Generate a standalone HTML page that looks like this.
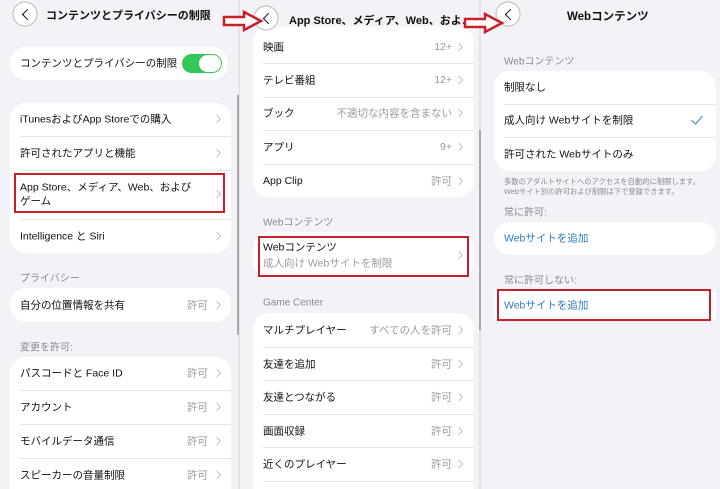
<!DOCTYPE html><html><head><meta charset="utf-8"><style>
*{margin:0;padding:0;box-sizing:border-box}
html{width:720px;height:489px;overflow:hidden}
body{width:720px;height:489px;background:#f2f2f7;font-family:"Liberation Sans","Noto Sans CJK JP",sans-serif;position:relative;overflow:hidden;color:#111}
.a{position:absolute;white-space:nowrap}
.card{position:absolute;background:#fff;border-radius:16px}
.t{position:absolute;font-size:10.5px;transform:translateY(-50%);white-space:nowrap}
.v{position:absolute;font-size:10.5px;color:#9a9aa0;transform:translateY(-50%);white-space:nowrap;text-align:right}
.h{position:absolute;font-size:10px;color:#8a8a8f;transform:translateY(-50%);white-space:nowrap}
.sep{position:absolute;height:1px;background:#e6e6ea}
.chev{position:absolute;width:6px;height:6px;border-right:1.3px solid #c4c4c8;border-top:1.3px solid #c4c4c8;transform:translate(-50%,-50%) rotate(45deg)}
.back{position:absolute;width:25px;height:25px;border-radius:50%;background:#fff;border:1px solid #bbb;transform:translate(-50%,-50%)}
.back:after{content:"";position:absolute;left:10px;top:8px;width:7px;height:7px;border-left:1.6px solid #111;border-bottom:1.6px solid #111;transform:rotate(45deg)}
.red{position:absolute;border:2.5px solid #c8202a}
.blue{color:#2a7cc0}
.p1{right:512px}.p2{right:268px}
</style></head><body>
<div class="a" style="left:238px;top:0;width:2px;height:489px;background:#e4e4e8"></div>
<div class="a" style="left:237px;top:95px;width:2px;height:240px;background:#a8a8ac"></div>
<div class="a" style="left:479px;top:0;width:2px;height:489px;background:#e4e4e8"></div>
<div class="a" style="left:479px;top:130px;width:2px;height:200px;background:#a8a8ac"></div>

<!-- Panel 1 -->
<div class="back" style="left:25px;top:14px"></div>
<div class="a" style="left:46px;top:7px;font-size:11px;font-weight:bold">コンテンツとプライバシーの制限</div>
<div class="card" style="left:10px;top:47px;width:218px;height:33px"></div>
<div class="t" style="left:20px;top:63px">コンテンツとプライバシーの制限</div>
<div class="a" style="left:182px;top:54px;width:40px;height:19px;border-radius:10px;background:#34c759"></div>
<div class="a" style="left:199px;top:55px;width:22px;height:17px;border-radius:9px;background:#fff"></div>

<div class="card" style="left:10px;top:103px;width:221px;height:150px"></div>
<div class="t" style="left:20px;top:119px">iTunesおよびApp Storeでの購入</div><div class="chev" style="left:217px;top:119px"></div>
<div class="sep" style="left:20px;top:136px;width:211px"></div>
<div class="t" style="left:20px;top:153px">許可されたアプリと機能</div><div class="chev" style="left:217px;top:153px"></div>
<div class="sep" style="left:20px;top:170px;width:211px"></div>
<div class="t" style="left:20px;top:187px">App Store、メディア、Web、および</div>
<div class="t" style="left:20px;top:201px">ゲーム</div><div class="chev" style="left:217px;top:194px"></div>
<div class="red" style="left:14px;top:173px;width:211px;height:40px"></div>
<div class="sep" style="left:20px;top:219px;width:211px"></div>
<div class="t" style="left:20px;top:236px">Intelligence と Siri</div><div class="chev" style="left:217px;top:236px"></div>

<div class="h" style="left:20px;top:277px">プライバシー</div>
<div class="card" style="left:10px;top:288px;width:221px;height:34px"></div>
<div class="t" style="left:20px;top:305px">自分の位置情報を共有</div><div class="v p1" style="top:305px">許可</div><div class="chev" style="left:217px;top:305px"></div>
<div class="h" style="left:20px;top:346px">変更を許可:</div>
<div class="card" style="left:10px;top:357px;width:221px;height:150px"></div>
<div class="t" style="left:20px;top:373px">パスコードと Face ID</div><div class="v p1" style="top:373px">許可</div><div class="chev" style="left:217px;top:373px"></div>
<div class="sep" style="left:20px;top:390px;width:211px"></div>
<div class="t" style="left:20px;top:407px">アカウント</div><div class="v p1" style="top:407px">許可</div><div class="chev" style="left:217px;top:407px"></div>
<div class="sep" style="left:20px;top:424px;width:211px"></div>
<div class="t" style="left:20px;top:441px">モバイルデータ通信</div><div class="v p1" style="top:441px">許可</div><div class="chev" style="left:217px;top:441px"></div>
<div class="sep" style="left:20px;top:458px;width:211px"></div>
<div class="t" style="left:20px;top:475px">スピーカーの音量制限</div><div class="v p1" style="top:475px">許可</div><div class="chev" style="left:217px;top:475px"></div>

<!-- Panel 2 -->
<div class="card" style="left:253px;top:26px;width:221px;height:171px"></div>
<div class="t" style="left:263px;top:47px">映画</div><div class="v p2" style="top:47px">12+</div><div class="chev" style="left:459px;top:47px"></div>
<div class="sep" style="left:263px;top:63px;width:211px"></div>
<div class="t" style="left:263px;top:80px">テレビ番組</div><div class="v p2" style="top:80px">12+</div><div class="chev" style="left:459px;top:80px"></div>
<div class="sep" style="left:263px;top:97px;width:211px"></div>
<div class="t" style="left:263px;top:113px">ブック</div><div class="v p2" style="top:113px">不適切な内容を含まない</div><div class="chev" style="left:459px;top:113px"></div>
<div class="sep" style="left:263px;top:130px;width:211px"></div>
<div class="t" style="left:263px;top:147px">アプリ</div><div class="v p2" style="top:147px">9+</div><div class="chev" style="left:459px;top:147px"></div>
<div class="sep" style="left:263px;top:164px;width:211px"></div>
<div class="t" style="left:263px;top:181px">App Clip</div><div class="v p2" style="top:181px">許可</div><div class="chev" style="left:459px;top:181px"></div>
<div class="a" style="left:240px;top:0;width:238px;height:30px;background:linear-gradient(#f2f2f7 70%,rgba(242,242,247,0))"></div>
<div class="back" style="left:266px;top:18px"></div>
<div class="a" style="left:289px;top:12px;font-size:11px;font-weight:bold">App Store、メディア、Web、およ…</div>

<div class="h" style="left:263px;top:221px">Webコンテンツ</div>
<div class="card" style="left:253px;top:232px;width:221px;height:46px"></div>
<div class="t" style="left:263px;top:247px">Webコンテンツ</div>
<div class="t" style="left:263px;top:263px;color:#9a9aa0">成人向け Webサイトを制限</div><div class="chev" style="left:459px;top:255px"></div>
<div class="red" style="left:258px;top:236px;width:211px;height:41px"></div>
<div class="h" style="left:263px;top:303px">Game Center</div>
<div class="card" style="left:253px;top:313px;width:221px;height:200px"></div>
<div class="t" style="left:263px;top:330px">マルチプレイヤー</div><div class="v p2" style="top:330px">すべての人を許可</div><div class="chev" style="left:459px;top:330px"></div>
<div class="sep" style="left:263px;top:347px;width:211px"></div>
<div class="t" style="left:263px;top:364px">友達を追加</div><div class="v p2" style="top:364px">許可</div><div class="chev" style="left:459px;top:364px"></div>
<div class="sep" style="left:263px;top:380px;width:211px"></div>
<div class="t" style="left:263px;top:397px">友達とつながる</div><div class="v p2" style="top:397px">許可</div><div class="chev" style="left:459px;top:397px"></div>
<div class="sep" style="left:263px;top:414px;width:211px"></div>
<div class="t" style="left:263px;top:431px">画面収録</div><div class="v p2" style="top:431px">許可</div><div class="chev" style="left:459px;top:431px"></div>
<div class="sep" style="left:263px;top:447px;width:211px"></div>
<div class="t" style="left:263px;top:464px">近くのプレイヤー</div><div class="v p2" style="top:464px">許可</div><div class="chev" style="left:459px;top:464px"></div>
<div class="sep" style="left:263px;top:481px;width:211px"></div>

<!-- Panel 3 -->
<div class="back" style="left:508px;top:14px"></div>
<div class="a" style="left:567px;top:8px;font-size:11.5px;font-weight:bold">Webコンテンツ</div>
<div class="h" style="left:504px;top:60px">Webコンテンツ</div>
<div class="card" style="left:494px;top:71px;width:222px;height:100px"></div>
<div class="t" style="left:504px;top:87px">制限なし</div>
<div class="sep" style="left:504px;top:104px;width:212px"></div>
<div class="t" style="left:504px;top:120px">成人向け Webサイトを制限</div>
<div class="a" style="left:694px;top:113px;width:6px;height:11px;border-right:1.6px solid #2a7cc0;border-bottom:1.6px solid #2a7cc0;transform:rotate(40deg)"></div>
<div class="sep" style="left:504px;top:137px;width:212px"></div>
<div class="t" style="left:504px;top:154px">許可された Webサイトのみ</div>
<div class="a" style="left:504px;top:177px;font-size:7.3px;color:#8a8a8f;line-height:10px">多数のアダルトサイトへのアクセスを自動的に制限します。<br>Webサイト別の許可および制限は下で登録できます。</div>
<div class="h" style="left:504px;top:211px">常に許可:</div>
<div class="card" style="left:494px;top:222px;width:222px;height:33px"></div>
<div class="t blue" style="left:504px;top:238px">Webサイトを追加</div>
<div class="h" style="left:504px;top:279px">常に許可しない:</div>
<div class="card" style="left:494px;top:289px;width:222px;height:32px;border-radius:0"></div>
<div class="t blue" style="left:504px;top:305px">Webサイトを追加</div>
<div class="red" style="left:497px;top:289px;width:214px;height:32px"></div>

<svg class="a" style="left:222px;top:10px" width="42" height="22" viewBox="0 0 42 22"><path d="M2 7H22V2L39 11L22 20V15H2Z" fill="#fff" stroke="#c8202a" stroke-width="2.5"/></svg>
<svg class="a" style="left:463px;top:12px" width="42" height="22" viewBox="0 0 42 22"><path d="M2 7H22V2L39 11L22 20V15H2Z" fill="#fff" stroke="#c8202a" stroke-width="2.5"/></svg>
</body></html>
